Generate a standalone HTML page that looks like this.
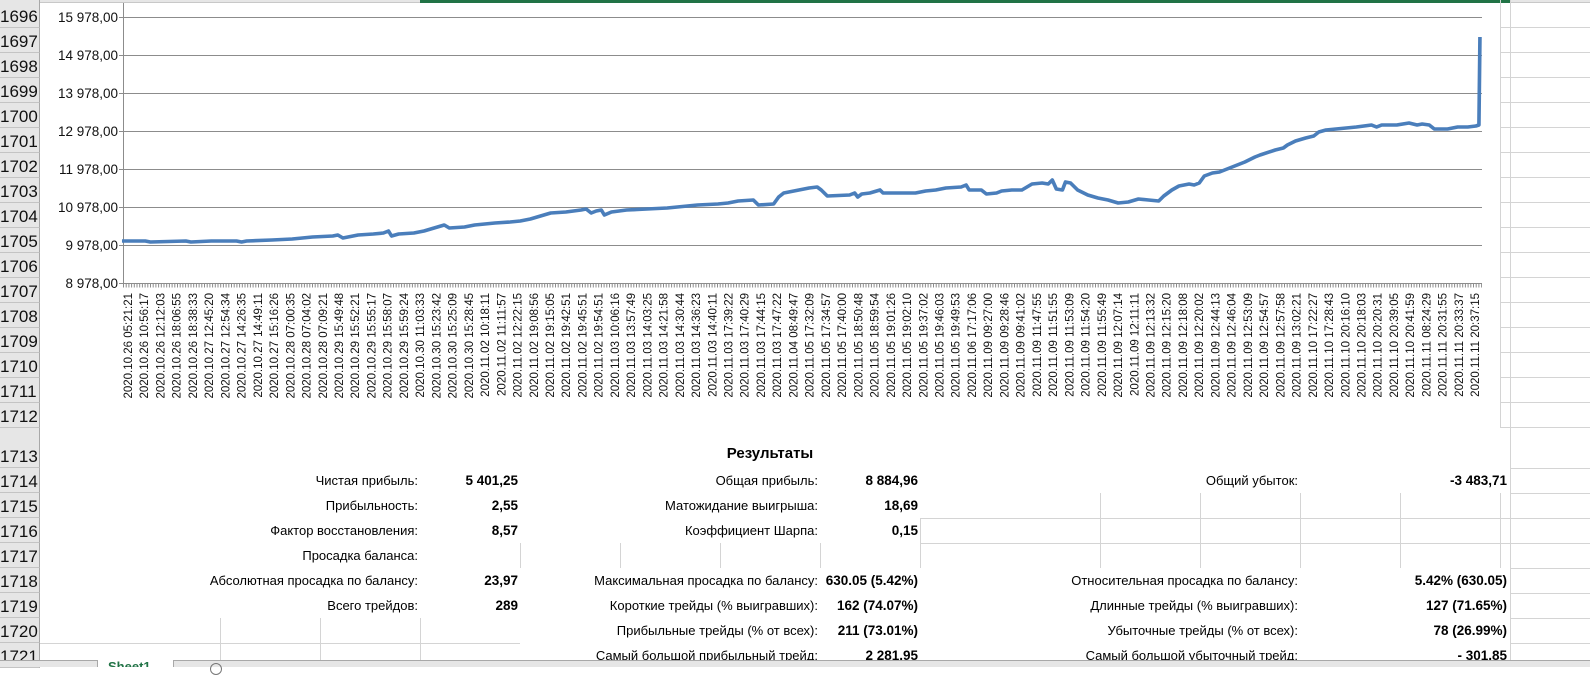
<!DOCTYPE html>
<html><head><meta charset="utf-8"><style>
*{margin:0;padding:0;box-sizing:border-box}
body{width:1590px;height:667px;overflow:hidden;background:#fff;position:relative;font-family:"Liberation Sans","DejaVu Sans",sans-serif;color:#000}
.rh{position:absolute;left:0;width:40px;background:#e6e6e6;border-bottom:1px solid #c4c4c4;border-right:1px solid #a8a8a8;font-size:17px;text-align:right;padding-right:3px;color:#111;overflow:hidden}
.t{position:absolute;font-size:13px;line-height:25px;white-space:nowrap;text-align:right}
.b{font-weight:bold}
.vl{position:absolute;width:1px;background:#d4d4d4}
.hl{position:absolute;height:1px;background:#d4d4d4}
</style></head><body>

<div style="position:absolute;left:0;top:0;width:1590px;height:3px;background:#e6e6e6;border-bottom:1px solid #c8c8c8"></div>
<div style="position:absolute;left:420px;top:0;width:1090px;height:3px;background:#217346"></div>

<div class="vl" style="left:1500px;top:0;height:427px"></div>
<div class="vl" style="left:1510px;top:0;height:660px"></div>
<div id="rg"></div>

<div class="vl" style="left:520px;top:543px;height:25px"></div>
<div class="vl" style="left:620px;top:543px;height:25px"></div>
<div class="vl" style="left:720px;top:543px;height:25px"></div>
<div class="vl" style="left:820px;top:543px;height:25px"></div>
<div class="vl" style="left:920px;top:518px;height:50px"></div>
<div class="vl" style="left:1100px;top:493px;height:75px"></div>
<div class="vl" style="left:1200px;top:493px;height:75px"></div>
<div class="vl" style="left:1300px;top:493px;height:75px"></div>
<div class="vl" style="left:1400px;top:493px;height:75px"></div>
<div class="vl" style="left:1500px;top:493px;height:75px"></div>
<div class="hl" style="left:920px;top:518px;width:670px"></div>
<div class="hl" style="left:920px;top:543px;width:670px"></div>
<div class="hl" style="left:1510px;top:468px;width:80px"></div>
<div class="hl" style="left:1510px;top:493px;width:80px"></div>
<div class="hl" style="left:1510px;top:568px;width:80px"></div>
<div class="hl" style="left:1510px;top:593px;width:80px"></div>
<div class="hl" style="left:1510px;top:618px;width:80px"></div>
<div class="hl" style="left:1510px;top:643px;width:80px"></div>
<div class="vl" style="left:220px;top:618px;height:42px"></div>
<div class="vl" style="left:320px;top:618px;height:42px"></div>
<div class="vl" style="left:420px;top:618px;height:42px"></div>
<div class="hl" style="left:40px;top:643px;width:480px"></div>

<div id="rows"></div>

<svg style="position:absolute;left:0;top:0" width="1590" height="430" xmlns="http://www.w3.org/2000/svg">
<g stroke="#8c8c8c" stroke-width="1">
<line x1="119" y1="17.5" x2="1482" y2="17.5"/>
<line x1="119" y1="55.5" x2="1482" y2="55.5"/>
<line x1="119" y1="93.5" x2="1482" y2="93.5"/>
<line x1="119" y1="131.5" x2="1482" y2="131.5"/>
<line x1="119" y1="169.5" x2="1482" y2="169.5"/>
<line x1="119" y1="207.5" x2="1482" y2="207.5"/>
<line x1="119" y1="245.5" x2="1482" y2="245.5"/>
<line x1="119" y1="283.5" x2="1482" y2="283.5"/>
<line x1="123.5" y1="3" x2="123.5" y2="287"/>
</g>
<line x1="123" y1="285.5" x2="1482" y2="285.5" stroke="#8c8c8c" stroke-width="4" stroke-dasharray="1 1.7"/>
<g font-family="Liberation Sans, DejaVu Sans, sans-serif" font-size="13.5" text-anchor="end" fill="#111">
<text x="118" y="22">15 978,00</text>
<text x="118" y="60">14 978,00</text>
<text x="118" y="98">13 978,00</text>
<text x="118" y="136">12 978,00</text>
<text x="118" y="174">11 978,00</text>
<text x="118" y="212">10 978,00</text>
<text x="118" y="250">9 978,00</text>
<text x="118" y="288">8 978,00</text>
</g>
<g transform="translate(123,0) scale(1.0134,1) translate(-123,0)">
<polyline fill="none" stroke="#4a7ebb" stroke-width="3.6" stroke-linejoin="round" points="122,241 145,241 150,242 185,241 190,242 210,241 235,241 240,242 245,241 270,240 290,239 300,238 310,237 330,236 335,235 340,238 345,237 355,235 370,234 380,233 385,231 388,236 395,234 410,233 420,231 430,228 440,225 445,228 460,227 470,225 490,223 505,222 515,221 525,219 535,216 545,213 560,212 575,210 580,209 585,213 590,211 595,210 598,215 605,212 620,210 640,209 660,208 670,207 690,205 710,204 720,203 730,201 745,200 750,205 765,204 770,197 775,193 790,190 800,188 808,187 812,190 818,196 840,195 845,193 848,197 852,194 860,193 870,190 873,193 880,193 905,193 915,191 925,190 935,188 950,187 955,185 958,190 970,190 975,194 985,193 990,191 1000,190 1010,190 1015,187 1020,184 1030,183 1036,184 1040,180 1044,189 1050,190 1053,182 1058,183 1065,190 1075,195 1085,198 1095,200 1105,203 1115,202 1125,199 1135,200 1145,201 1150,196 1158,190 1165,186 1175,184 1180,185 1185,183 1190,176 1198,173 1205,172 1215,168 1230,162 1240,157 1245,155 1260,150 1268,148 1272,145 1280,141 1290,138 1298,136 1303,132 1310,130 1320,129 1340,127 1355,125 1360,127 1365,125 1380,125 1392,123 1400,125 1405,124 1412,125 1417,129 1430,129 1440,127 1450,127 1458,126 1461,125 1462,37"/>
</g>
<g id="xl" font-family="Liberation Sans, DejaVu Sans, sans-serif" font-size="11.5" fill="#111" text-anchor="end"></g>
</svg>

<div class="t b" style="left:700px;width:140px;text-align:center;top:441px;font-size:15px">Результаты</div>
<div id="res"></div>

<div style="position:absolute;left:0;top:660px;width:1590px;height:7px;background:#e6e6e6;border-top:1px solid #a8a8a8"></div>
<div style="position:absolute;left:97px;top:660px;width:77px;height:7px;background:#fff;border-left:1px solid #a8a8a8;border-right:1px solid #a8a8a8"></div>
<div style="position:absolute;left:108px;top:661px;font-size:13px;font-weight:bold;color:#217346;line-height:12px;height:6px;overflow:hidden">Sheet1</div>
<div style="position:absolute;left:210px;top:663px;width:12px;height:12px;border:1px solid #777;border-radius:50%"></div>

<script>
(function(){
var rows=document.getElementById('rows'),h='';
for(var i=0;i<26;i++){var n=1696+i,top,ht;
 if(i<=16){top=3+25*i-(i==0?3:0);ht=(i==0?27:25);}
 else if(i==17){top=428;ht=40;}
 else {top=468+25*(i-18);ht=25;}
 if(i==0){top=0;ht=28;}
 h+='<div class="rh" style="top:'+top+'px;height:'+ht+'px;line-height:'+(ht*2-22)+'px">'+n+'</div>';}
rows.innerHTML=h;
var rg='';
for(var y=27;y<=402;y+=25) rg+='<div class="hl" style="left:1500px;top:'+y+'px;width:90px"></div>';
rg+='<div class="hl" style="left:1500px;top:427px;width:90px"></div>';
document.getElementById('rg').innerHTML=rg;
var L=["2020.10.26 05:21:21","2020.10.26 10:56:17","2020.10.26 12:12:03","2020.10.26 18:06:55","2020.10.26 18:38:33","2020.10.27 12:45:20","2020.10.27 12:54:34","2020.10.27 14:26:35","2020.10.27 14:49:11","2020.10.27 15:16:26","2020.10.28 07:00:35","2020.10.28 07:04:02","2020.10.28 07:09:21","2020.10.29 15:49:48","2020.10.29 15:52:21","2020.10.29 15:55:17","2020.10.29 15:58:07","2020.10.29 15:59:24","2020.10.30 11:03:33","2020.10.30 15:23:42","2020.10.30 15:25:09","2020.10.30 15:28:45","2020.11.02 10:18:11","2020.11.02 11:11:57","2020.11.02 12:22:15","2020.11.02 19:08:56","2020.11.02 19:15:05","2020.11.02 19:42:51","2020.11.02 19:45:51","2020.11.02 19:54:51","2020.11.03 10:06:16","2020.11.03 13:57:49","2020.11.03 14:03:25","2020.11.03 14:21:58","2020.11.03 14:30:44","2020.11.03 14:36:23","2020.11.03 14:40:11","2020.11.03 17:39:22","2020.11.03 17:40:29","2020.11.03 17:44:15","2020.11.03 17:47:22","2020.11.04 08:49:47","2020.11.05 17:32:09","2020.11.05 17:34:57","2020.11.05 17:40:00","2020.11.05 18:50:48","2020.11.05 18:59:54","2020.11.05 19:01:26","2020.11.05 19:02:10","2020.11.05 19:37:02","2020.11.05 19:46:03","2020.11.05 19:49:53","2020.11.06 17:17:06","2020.11.09 09:27:00","2020.11.09 09:28:46","2020.11.09 09:41:02","2020.11.09 11:47:55","2020.11.09 11:51:55","2020.11.09 11:53:09","2020.11.09 11:54:20","2020.11.09 11:55:49","2020.11.09 12:07:14","2020.11.09 12:11:11","2020.11.09 12:13:32","2020.11.09 12:15:20","2020.11.09 12:18:08","2020.11.09 12:20:02","2020.11.09 12:44:13","2020.11.09 12:46:04","2020.11.09 12:53:09","2020.11.09 12:54:57","2020.11.09 12:57:58","2020.11.09 13:02:21","2020.11.10 17:22:27","2020.11.10 17:28:43","2020.11.10 20:16:10","2020.11.10 20:18:03","2020.11.10 20:20:31","2020.11.10 20:39:05","2020.11.10 20:41:59","2020.11.11 08:24:29","2020.11.11 20:31:55","2020.11.11 20:33:37","2020.11.11 20:37:15"];
var ns='http://www.w3.org/2000/svg',g=document.getElementById('xl');
for(var k=0;k<L.length;k++){var x=132+k*16.23,t=document.createElementNS(ns,'text');
 t.setAttribute('transform','translate('+x.toFixed(2)+',293) rotate(-90)');t.setAttribute('x','0');t.setAttribute('y','0');t.textContent=L[k];g.appendChild(t);}
var R=[
[0,"Чистая прибыль:","5 401,25","Общая прибыль:","8 884,96","Общий убыток:","-3 483,71"],
[1,"Прибыльность:","2,55","Матожидание выигрыша:","18,69","",""],
[2,"Фактор восстановления:","8,57","Коэффициент Шарпа:","0,15","",""],
[3,"Просадка баланса:","","","","",""],
[4,"Абсолютная просадка по балансу:","23,97","Максимальная просадка по балансу:","630.05 (5.42%)","Относительная просадка по балансу:","5.42% (630.05)"],
[5,"Всего трейдов:","289","Короткие трейды (% выигравших):","162 (74.07%)","Длинные трейды (% выигравших):","127 (71.65%)"],
[6,"","","Прибыльные трейды (% от всех):","211 (73.01%)","Убыточные трейды (% от всех):","78 (26.99%)"],
[7,"","","Самый большой прибыльный трейд:","2 281,95","Самый большой убыточный трейд:","- 301,85"]];
var s='',edges=[[418,518],[818,918],[1298,1507]],lefts=[[40,420],[420,821],[920,1300]];
R.forEach(function(r){var top=468+25*r[0];
 for(var c=0;c<3;c++){var lab=r[1+c*2],val=r[2+c*2];
  if(lab) s+='<div class="t" style="right:'+(1590-edges[c][0])+'px;top:'+top+'px">'+lab+'</div>';
  if(val) s+='<div class="t b" style="left:'+lefts[c][1]+'px;width:'+(edges[c][1]-lefts[c][1])+'px;overflow:hidden;top:'+top+'px;direction:rtl;font-size:13.5px"><span style="direction:ltr;unicode-bidi:embed">'+val+'</span></div>';}
});
document.getElementById('res').innerHTML=s;
})();
</script>
</body></html>
